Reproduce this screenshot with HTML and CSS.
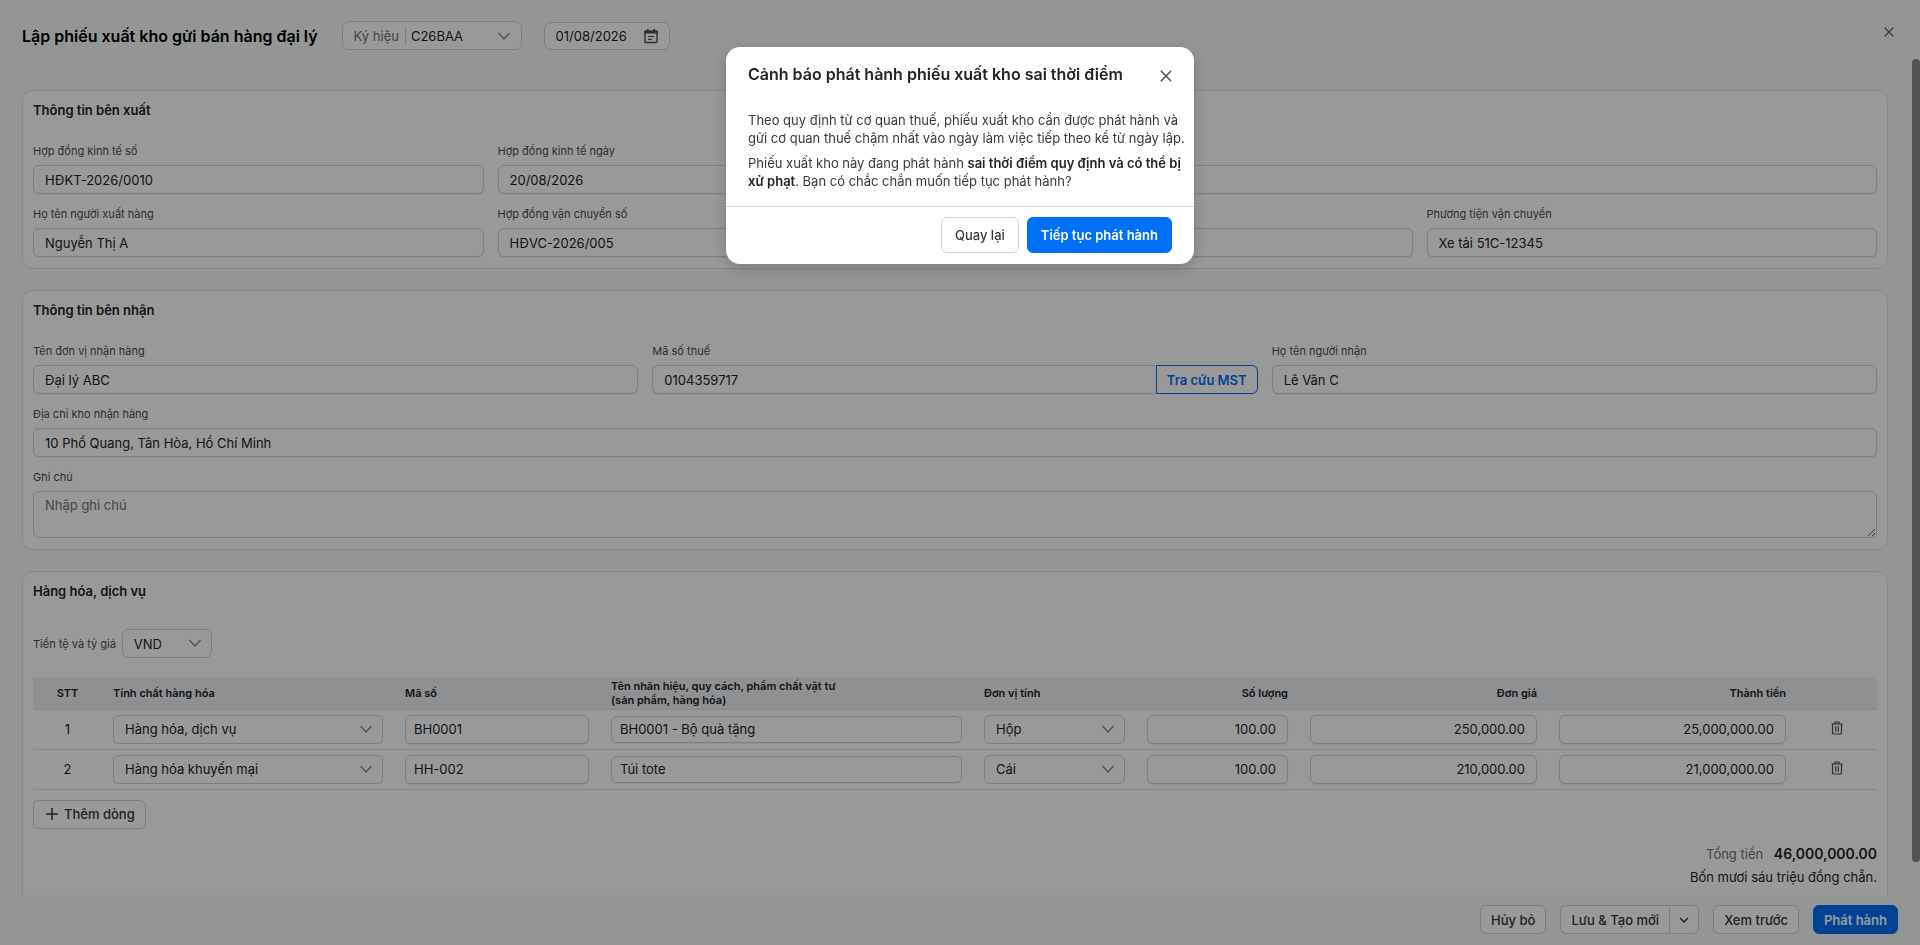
FILE: index.html
```
<!DOCTYPE html>
<html lang="vi">
<head>
    <meta charset="UTF-8">
    <meta name="viewport" content="width=device-width, initial-scale=1.0">
    <title>Lập phiếu xuất kho gửi bán hàng đại lý</title>
    <link rel="stylesheet" href="styles.css">
</head>
<body>
    <!-- Shared icons -->
    <svg class="sprite" aria-hidden="true">
        <symbol id="icon-chevron" viewBox="0 0 14 14">
            <path d="M1.500 4 7 10l5.500-6" fill="none" stroke="currentColor" stroke-width="1.2"/>
        </symbol>
        <symbol id="icon-close" viewBox="0 0 12 12">
            <path d="M.8.8l10.400 10.400M11.200.8.8 11.200" fill="none" stroke="currentColor" stroke-width="1.5"/>
        </symbol>
        <symbol id="icon-trash" viewBox="0 0 12 14">
            <path d="M.5 3h11M4 3V1.500Q4 1 4.500 1h3Q8 1 8 1.500V3M1.500 3v9q0 1 1 1h7q1 0 1-1V3M4.700 5.300v5.400M7.300 5.300v5.400" fill="none" stroke="currentColor" stroke-width="1.2"/>
        </symbol>
        <symbol id="icon-calendar" viewBox="0 0 14 16">
            <path d="M1 3.500h12v10q0 1-1 1H2q-1 0-1-1z" fill="none" stroke="currentColor" stroke-width="1.400"/>
            <path d="M.500 2.500h13v3H.500zM3 1h1.600v2H3zM9.400 1H11v2H9.400z" fill="currentColor"/>
            <path d="M4 8.500h6M4 11.300h4" stroke="currentColor" stroke-width="1.200"/>
        </symbol>
    </svg>

    <div class="page">
        <header class="page-header">
            <h1>Lập phiếu xuất kho gửi bán hàng đại lý</h1>
            <div class="symbol-select">
                <label for="symbol">Ký hiệu</label>
                <select id="symbol"><option>C26BAA</option></select>
                <svg class="chevron"><use href="#icon-chevron"/></svg>
            </div>
            <div class="date-box">
                <input type="text" id="docDate" value="01/08/2026" aria-label="Ngày lập">
                <svg class="calendar"><use href="#icon-calendar"/></svg>
            </div>
            <button class="page-close" aria-label="Đóng"><svg><use href="#icon-close"/></svg></button>
        </header>

        <div class="scroll-area">
            <main class="content">
                <!-- Sender -->
                <section class="card">
                    <h2>Thông tin bên xuất</h2>
                    <div class="grid four">
                        <div class="field">
                            <label for="contractNo">Hợp đồng kinh tế số</label>
                            <input type="text" id="contractNo" value="HĐKT-2026/0010">
                        </div>
                        <div class="field">
                            <label for="contractDate">Hợp đồng kinh tế ngày</label>
                            <input type="text" id="contractDate" value="20/08/2026">
                        </div>
                        <div class="field wide">
                            <input type="text" aria-label="Về việc">
                        </div>
                        <div class="field">
                            <label for="sender">Họ tên người xuất hàng</label>
                            <input type="text" id="sender" value="Nguyễn Thị A">
                        </div>
                        <div class="field">
                            <label for="transportNo">Hợp đồng vận chuyển số</label>
                            <input type="text" id="transportNo" value="HĐVC-2026/005">
                        </div>
                        <div class="field">
                            <input type="text" aria-label="Người vận chuyển">
                        </div>
                        <div class="field">
                            <label for="vehicle">Phương tiện vận chuyển</label>
                            <input type="text" id="vehicle" value="Xe tải 51C-12345">
                        </div>
                    </div>
                </section>

                <!-- Receiver -->
                <section class="card">
                    <h2>Thông tin bên nhận</h2>
                    <div class="grid three">
                        <div class="field">
                            <label for="receiverUnit">Tên đơn vị nhận hàng</label>
                            <input type="text" id="receiverUnit" value="Đại lý ABC">
                        </div>
                        <div class="field">
                            <label for="taxCode">Mã số thuế</label>
                            <div class="input-group">
                                <input type="text" id="taxCode" value="0104359717">
                                <button class="lookup">Tra cứu MST</button>
                            </div>
                        </div>
                        <div class="field">
                            <label for="receiver">Họ tên người nhận</label>
                            <input type="text" id="receiver" value="Lê Văn C">
                        </div>
                        <div class="field full">
                            <label for="address">Địa chỉ kho nhận hàng</label>
                            <input type="text" id="address" value="10 Phổ Quang, Tân Hòa, Hồ Chí Minh">
                        </div>
                        <div class="field full">
                            <label for="note">Ghi chú</label>
                            <textarea id="note" placeholder="Nhập ghi chú"></textarea>
                        </div>
                    </div>
                </section>

                <!-- Goods -->
                <section class="card">
                    <h2>Hàng hóa, dịch vụ</h2>
                    <div class="currency">
                        <label for="currency">Tiền tệ và tỷ giá</label>
                        <div class="select">
                            <select id="currency"><option>VND</option></select>
                            <svg class="chevron"><use href="#icon-chevron"/></svg>
                        </div>
                    </div>

                    <table class="goods">
                        <thead>
                            <tr>
                                <th class="col-no">STT</th>
                                <th class="col-kind">Tính chất hàng hóa</th>
                                <th class="col-code">Mã số</th>
                                <th>Tên nhãn hiệu, quy cách, phẩm chất vật tư<br>(sản phẩm, hàng hóa)</th>
                                <th class="col-unit">Đơn vị tính</th>
                                <th class="col-qty number">Số lượng</th>
                                <th class="col-price number">Đơn giá</th>
                                <th class="col-price number">Thành tiền</th>
                                <th class="col-action"></th>
                            </tr>
                        </thead>
                        <tbody>
                            <tr>
                                <td class="col-no">1</td>
                                <td><div class="select"><select aria-label="Tính chất hàng hóa"><option>Hàng hóa, dịch vụ</option></select><svg class="chevron"><use href="#icon-chevron"/></svg></div></td>
                                <td><input type="text" value="BH0001" aria-label="Mã số"></td>
                                <td><input type="text" class="short" value="BH0001 - Bộ quà tặng" aria-label="Tên hàng hóa"></td>
                                <td><div class="select"><select aria-label="Đơn vị tính"><option>Hộp</option></select><svg class="chevron"><use href="#icon-chevron"/></svg></div></td>
                                <td class="number"><input type="text" value="100.00" aria-label="Số lượng"></td>
                                <td class="number"><input type="text" value="250,000.00" aria-label="Đơn giá"></td>
                                <td class="number"><input type="text" value="25,000,000.00" aria-label="Thành tiền"></td>
                                <td class="col-action"><button class="delete" aria-label="Xóa dòng"><svg><use href="#icon-trash"/></svg></button></td>
                            </tr>
                            <tr>
                                <td class="col-no">2</td>
                                <td><div class="select"><select aria-label="Tính chất hàng hóa"><option>Hàng hóa khuyến mại</option></select><svg class="chevron"><use href="#icon-chevron"/></svg></div></td>
                                <td><input type="text" value="HH-002" aria-label="Mã số"></td>
                                <td><input type="text" class="short" value="Túi tote" aria-label="Tên hàng hóa"></td>
                                <td><div class="select"><select aria-label="Đơn vị tính"><option>Cái</option></select><svg class="chevron"><use href="#icon-chevron"/></svg></div></td>
                                <td class="number"><input type="text" value="100.00" aria-label="Số lượng"></td>
                                <td class="number"><input type="text" value="210,000.00" aria-label="Đơn giá"></td>
                                <td class="number"><input type="text" value="21,000,000.00" aria-label="Thành tiền"></td>
                                <td class="col-action"><button class="delete" aria-label="Xóa dòng"><svg><use href="#icon-trash"/></svg></button></td>
                            </tr>
                        </tbody>
                    </table>

                    <button class="btn add-row">
                        <svg viewBox="0 0 12 12"><path d="M6 0v12M0 6h12" stroke="currentColor" stroke-width="1.500"/></svg>
                        Thêm dòng
                    </button>

                    <div class="totals">
                        <p><span>Tổng tiền</span> <strong>46,000,000.00</strong></p>
                        <p>Bốn mươi sáu triệu đồng chẵn.</p>
                    </div>
                </section>
            </main>
            <div class="scrollbar"><div class="thumb"></div></div>
        </div>

        <footer class="page-footer">
            <button class="btn">Hủy bỏ</button>
            <div class="btn-group">
                <button class="btn">Lưu &amp; Tạo mới</button>
                <button class="btn toggle" aria-label="Thêm lựa chọn"><svg viewBox="0 0 10 10"><path d="M1 3l4 4 4-4" fill="none" stroke="currentColor" stroke-width="1.400"/></svg></button>
            </div>
            <button class="btn">Xem trước</button>
            <button class="btn primary">Phát hành</button>
        </footer>
    </div>

    <!-- Late issue warning -->
    <div class="overlay">
        <div class="modal" role="dialog" aria-modal="true" aria-labelledby="modalTitle">
            <div class="modal-header">
                <h2 id="modalTitle">Cảnh báo phát hành phiếu xuất kho sai thời điểm</h2>
                <button class="modal-close" aria-label="Đóng"><svg><use href="#icon-close"/></svg></button>
            </div>
            <div class="modal-body">
                <p>Theo quy định từ cơ quan thuế, phiếu xuất kho cần được phát hành và gửi cơ quan thuế chậm nhất vào ngày làm việc tiếp theo kể từ ngày lập.</p>
                <p>Phiếu xuất kho này đang phát hành <strong>sai thời điểm quy định và có thể bị xử phạt</strong>. Bạn có chắc chắn muốn tiếp tục phát hành?</p>
            </div>
            <div class="modal-footer">
                <button class="btn">Quay lại</button>
                <button class="btn primary">Tiếp tục phát hành</button>
            </div>
        </div>
    </div>
</body>
</html>
```
FILE: styles.css
```
* {
    box-sizing: border-box;
}
body {
    margin: 0;
    font-family: Inter, "Liberation Sans", sans-serif;
    font-size: 13px;
    line-height: 18px;
    color: #212529;
    background: #f5faf7;
}
h1, h2, p {
    margin: 0;
}
button, input, select, textarea {
    font: inherit;
    color: inherit;
}
button {
    cursor: pointer;
}
.sprite {
    display: none;
}

/* Page frame */
.page {
    display: flex;
    flex-direction: column;
    height: 100vh;
}
.page-header {
    display: flex;
    align-items: center;
    height: 57px;
    padding: 14px 26px 0 22px;
}
.page-header h1 {
    margin-right: 24px;
    font-size: 16px;
    font-weight: 600;
    line-height: 24px;
    color: #000;
}
.scroll-area {
    display: flex;
    flex: 1;
    min-height: 0;
}
.content {
    flex: 1;
    min-width: 0;
    overflow-y: auto;
    scrollbar-width: none;
    padding: 33px 24px 22px 22px;
}
.scrollbar {
    width: 8px;
    padding-top: 2px;
    background: #fafafa;
}
.thumb {
    height: 96%;
    border-radius: 4px;
    background: #8b8888;
}

/* Inputs */
input, select, textarea {
    display: block;
    width: 100%;
    height: 29px;
    padding: 0 11px;
    border: 1px solid #cfd4da;
    border-radius: 6px;
    background: #fff;
    outline: none;
}
input {
    box-shadow: 0 1px 1px rgba(0, 0, 0, 0.06);
}
textarea {
    height: 47px;
    padding: 4px 11px;
    resize: vertical;
}
textarea::placeholder {
    color: #757575;
}
select {
    appearance: none;
    padding-right: 30px;
}
.select {
    position: relative;
}
.chevron {
    width: 14px;
    height: 14px;
    color: #7b848c;
    pointer-events: none;
}
.select .chevron {
    position: absolute;
    top: 7px;
    right: 10px;
}
.symbol-select, .date-box {
    display: flex;
    align-items: center;
    border: 1px solid #cfd4da;
    border-radius: 7px;
    background: #fff;
}
.symbol-select {
    width: 180px;
    height: 29px;
    margin-right: 22px;
    padding: 0 10px 0 11px;
}
.symbol-select label {
    padding-right: 6px;
    border-right: 1px solid #cfd4da;
    color: #6c757d;
    white-space: nowrap;
}
.symbol-select select, .date-box input {
    flex: 1;
    min-width: 0;
    height: 26px;
    padding: 0 5px;
    border: none;
    background: none;
    box-shadow: none;
}
.date-box {
    width: 126px;
    height: 28px;
    padding: 0 11px 0 6px;
}
.date-box svg {
    width: 14px;
    height: 16px;
    color: #495057;
}
.page-close, .modal-close, .delete {
    display: flex;
    padding: 0;
    border: none;
    background: none;
    color: #495057;
}
.page-close {
    margin: 0 0 7px auto;
}
.page-close svg {
    width: 10px;
    height: 10px;
}

/* Cards */
.card {
    margin-bottom: 21px;
    padding: 10px 10px 11px;
    border: 1px solid #e2e7e5;
    border-radius: 11px;
    background: #fff;
}
.card h2 {
    margin-bottom: 24px;
    font-size: 13px;
    font-weight: 600;
}
.grid {
    display: grid;
    gap: 12px 14px;
    align-items: end;
}
.four {
    grid-template-columns: repeat(4, 1fr);
}
.three {
    grid-template-columns: repeat(3, 1fr);
}
.wide {
    grid-column: span 2;
}
.full {
    grid-column: 1 / -1;
}
.field label, .currency label {
    display: block;
    font-size: 11px;
    line-height: 16px;
    color: #495057;
}
.field label {
    margin-bottom: 6px;
}
.input-group {
    display: flex;
}
.input-group input {
    border-right: none;
    border-radius: 6px 0 0 6px;
}
.lookup {
    flex-shrink: 0;
    height: 29px;
    padding: 0 10px;
    border: 1px solid #0070f9;
    border-radius: 0 6px 6px 0;
    background: #fff;
    color: #0070f9;
    font-weight: 600;
}

/* Goods table */
.currency {
    display: flex;
    align-items: center;
    gap: 6px;
    margin: 29px 0 19px;
}
.currency .select {
    width: 90px;
}
.goods {
    width: 100%;
    border-collapse: collapse;
    table-layout: fixed;
}
.goods th {
    height: 32px;
    padding: 0 11px;
    background: #eef0f3;
    border-bottom: 1px solid #dee2e6;
    font-size: 11px;
    font-weight: 600;
    line-height: 14px;
    text-align: left;
}
.goods td {
    height: 40px;
    padding: 0 11px;
    border-bottom: 1px solid #dee2e6;
}
.goods td > input {
    padding: 0 8px;
}
.goods td > .short {
    height: 27px;
}
.goods .col-no {
    width: 69px;
    text-align: center;
}
.goods .col-kind {
    width: 292px;
}
.goods .col-code {
    width: 206px;
}
.goods .col-unit, .goods .col-qty {
    width: 163px;
}
.goods .col-price {
    width: 249px;
}
.goods .col-action {
    width: 80px;
}
.goods .number {
    text-align: right;
}
.goods .number input {
    padding: 0 11px;
    text-align: right;
}
.delete {
    margin: 0 auto;
    padding-bottom: 3px;
}
.delete svg {
    width: 12px;
    height: 14px;
}

/* Buttons */
.btn {
    height: 29px;
    padding: 0 10px;
    border: 1px solid #cfd4da;
    border-radius: 6px;
    background: #fff;
    color: #343a40;
    font-weight: 500;
}
.btn.primary {
    border-color: #0070f9;
    background: #0070f9;
    color: #fff;
    font-weight: 600;
}
.add-row {
    display: flex;
    align-items: center;
    gap: 6px;
    margin: 10px 0 16px;
    padding: 0 10px 0 12px;
}
.add-row svg {
    width: 12px;
    height: 12px;
}
.btn-group {
    display: flex;
}
.btn-group .btn:first-child {
    border-right: none;
    border-radius: 6px 0 0 6px;
}
.btn-group .toggle {
    display: flex;
    align-items: center;
    padding: 0 9px;
    border-radius: 0 6px 6px 0;
}
.toggle svg {
    width: 10px;
    height: 10px;
}

/* Totals */
.totals {
    padding-bottom: 14px;
    text-align: right;
}
.totals p {
    margin-bottom: 5px;
}
.totals span {
    margin-right: 7px;
    color: #6c757d;
}
.totals strong {
    font-size: 14px;
    font-weight: 600;
}

.page-footer {
    display: flex;
    justify-content: flex-end;
    gap: 14px;
    height: 50px;
    padding: 10px 22px 0;
}

/* Modal */
.overlay {
    position: fixed;
    inset: 0;
    padding: 47px 16px;
    background: rgba(0, 0, 0, 0.4);
}
.modal {
    max-width: 468px;
    margin: 0 auto;
    border-radius: 14px;
    background: #fff;
    box-shadow: 0 4px 16px rgba(0, 0, 0, 0.2);
}
.modal-header {
    display: flex;
    justify-content: space-between;
    align-items: center;
    padding: 15px 22px 25px;
}
.modal-header h2 {
    font-size: 16px;
    font-weight: 600;
    line-height: 24px;
}
.modal-close {
    padding-top: 3px;
}
.modal-close svg {
    width: 12px;
    height: 12px;
}
.modal-body {
    padding: 0 4px 9px 22px;
    color: #343a40;
}
.modal-body p {
    margin-bottom: 7px;
}
.modal-body strong {
    font-weight: 600;
    color: #212529;
}
.modal-footer {
    display: flex;
    justify-content: flex-end;
    gap: 8px;
    padding: 10px 22px 11px;
    border-top: 1px solid #d3d6da;
}
.modal-footer .btn {
    height: 36px;
    padding: 0 13px;
}
```
